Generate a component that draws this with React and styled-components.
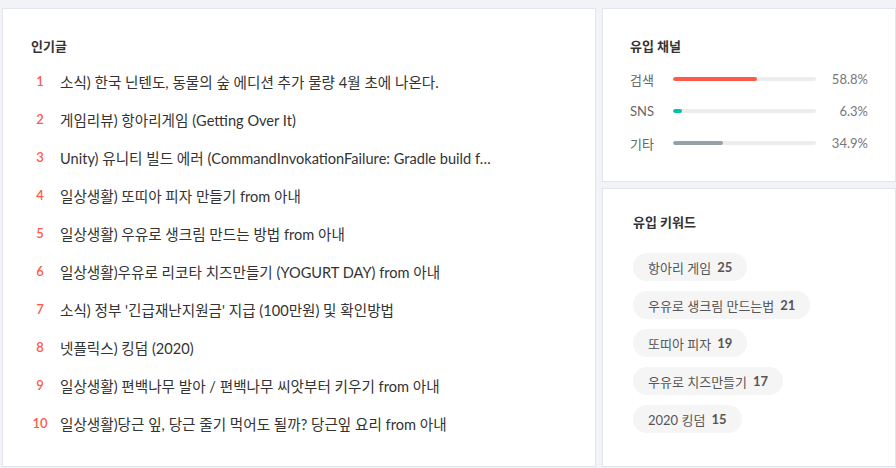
import React from "react"
import styled, { createGlobalStyle } from "styled-components"

const GlobalStyle = createGlobalStyle`
  body {
    margin: 0;
    background: #f2f3f6;
    font-family: Lato, "Noto Sans CJK KR", sans-serif;
    color: #333;
  }
`

const Page = styled.div`
  display: flex;
  gap: 6px;
  padding: 8px 0 0 2px;
  width: 896px;
  height: 468px;
  box-sizing: border-box;
`

const Card = styled.section`
  box-sizing: border-box;
  background: #fff;
  border: 1px solid #e2e5ee;
  width: ${(p) => p.width}px;
  height: ${(p) => p.height}px;
  padding: ${(p) => p.pad};
`

const Side = styled.div`
  display: flex;
  flex-direction: column;
  gap: 6px;
`

const Title = styled.h3`
  margin: 0;
  font-size: 13px;
  font-weight: 700;
  line-height: 18px;
  color: #333;
`

const List = styled.ol`
  list-style: none;
  margin: 16px 0 0;
  padding: 0;
  display: flex;
  flex-direction: column;
  gap: 18px;
`

const Item = styled.li`
  display: flex;
  align-items: center;
  height: 20px;
  font-size: 14.6px;
`

const Rank = styled.span`
  width: 20px;
  margin-left: -1px;
  text-align: center;
  color: #ff5a47;
  font-weight: 600;
  font-size: 13px;
`

const Headline = styled.span`
  margin-left: 10px;
  max-width: 460px;
  white-space: nowrap;
  color: #333;
`

const Channels = styled.div`
  display: flex;
  flex-direction: column;
  gap: 14px;
  margin-top: 15px;
`

const ChannelRow = styled.div`
  display: flex;
  align-items: center;
  height: 18px;
  font-size: 13px;
  color: #666;
`

const ChannelLabel = styled.span`
  width: 43px;
`

const Track = styled.div`
  width: 144px;
  height: 4px;
  border-radius: 2px;
  background: #ededed;
  overflow: hidden;
`

const Fill = styled.div`
  height: 100%;
  border-radius: 2px;
  background: ${(p) => p.color};
`

const Percent = styled.span`
  width: 52px;
  text-align: right;
  color: #777;
`

const Chips = styled.div`
  display: flex;
  flex-direction: column;
  align-items: flex-start;
  gap: 10px;
  margin-top: 22px;
`

const Chip = styled.span`
  display: inline-flex;
  align-items: center;
  gap: 6px;
  height: 28px;
  padding: 0 15px;
  border-radius: 14px;
  background: #f5f5f6;
  font-size: 13px;
  color: #555;

  b {
    font-weight: 700;
  }
`

const posts = [
  "소식) 한국 닌텐도, 동물의 숲 에디션 추가 물량 4월 초에 나온다.",
  "게임리뷰) 항아리게임 (Getting Over It)",
  "Unity) 유니티 빌드 에러 (CommandInvokationFailure: Gradle build f…",
  "일상생활) 또띠아 피자 만들기 from 아내",
  "일상생활) 우유로 생크림 만드는 방법 from 아내",
  "일상생활)우유로 리코타 치즈만들기 (YOGURT DAY) from 아내",
  "소식) 정부 '긴급재난지원금' 지급 (100만원) 및 확인방법",
  "넷플릭스) 킹덤 (2020)",
  "일상생활) 편백나무 발아 / 편백나무 씨앗부터 키우기 from 아내",
  "일상생활)당근 잎, 당근 줄기 먹어도 될까? 당근잎 요리 from 아내",
]

const channels = [
  { label: "검색", value: 58.8, color: "#ff5a47" },
  { label: "SNS", value: 6.3, color: "#00c3a5" },
  { label: "기타", value: 34.9, color: "#98a1ab" },
]

const keywords = [
  ["항아리 게임", 25],
  ["우유로 생크림 만드는법", 21],
  ["또띠아 피자", 19],
  ["우유로 치즈만들기", 17],
  ["2020 킹덤", 15],
]

const App = () => (
  <>
    <GlobalStyle />
    <Page>
      <Card width={594} height={459} pad="28px 28px">
        <Title>인기글</Title>
        <List>
          {posts.map((text, i) => (
            <Item key={i}>
              <Rank>{i + 1}</Rank>
              <Headline>{text}</Headline>
            </Item>
          ))}
        </List>
      </Card>
      <Side>
        <Card width={294} height={174} pad="28px 27px">
          <Title>유입 채널</Title>
          <Channels>
            {channels.map((c) => (
              <ChannelRow key={c.label}>
                <ChannelLabel>{c.label}</ChannelLabel>
                <Track>
                  <Fill color={c.color} style={{ width: `${c.value}%` }} />
                </Track>
                <Percent>{c.value}%</Percent>
              </ChannelRow>
            ))}
          </Channels>
        </Card>
        <Card width={294} height={279} pad="24px 30px">
          <Title>유입 키워드</Title>
          <Chips>
            {keywords.map(([word, n]) => (
              <Chip key={word}>
                {word}
                <b>{n}</b>
              </Chip>
            ))}
          </Chips>
        </Card>
      </Side>
    </Page>
  </>
)

export default App
